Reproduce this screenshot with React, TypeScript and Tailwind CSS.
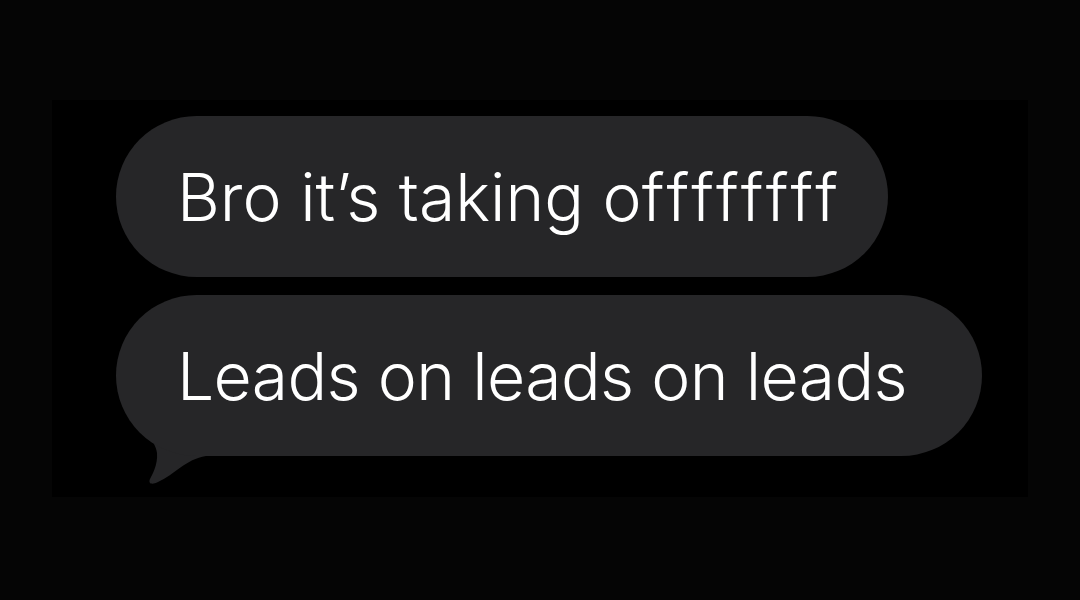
import React from "react";

const font = { fontFamily: "Inter, 'Noto Sans', sans-serif" };

const Bubble = ({ children, width, tail }: { children: React.ReactNode; width: string; tail?: boolean }) => {
  return (
    <div className="relative">
      <div className={`relative z-10 h-[161px] flex items-center rounded-full bg-[#262628] pl-[61px] ${width}`}>
        <span className="text-[66px] leading-none font-light text-white whitespace-nowrap" style={font}>
          {children}
        </span>
      </div>
      {/* tail */}
      {tail && (
        <svg className="absolute left-0 top-0 z-0" width="100" height="200" viewBox="0 0 100 200">
          <path
            d="M 22 110 C 24 135, 40 145, 41 158 C 42 170, 36 180, 34 184 C 32 189, 36 190, 42 187 C 58 180, 70 164, 90 161 L 90 110 Z"
            fill="#262628"
          />
        </svg>
      )}
    </div>
  );
};

export default function App() {
  return (
    <div className="min-h-screen w-full bg-[#050505] pt-[100px] pl-[52px]">
      <div className="w-[976px] h-[397px] bg-black pt-[16px] pl-[64px] flex flex-col items-start gap-[18px]">
        <Bubble width="w-[772px]">
          Bro it’s taking o<span className="tracking-[0.06em]">ffffffff</span>
        </Bubble>
        <Bubble width="w-[866px]" tail>
          <span className="tracking-[-0.01em]">Leads on leads on leads</span>
        </Bubble>
      </div>
    </div>
  );
}
